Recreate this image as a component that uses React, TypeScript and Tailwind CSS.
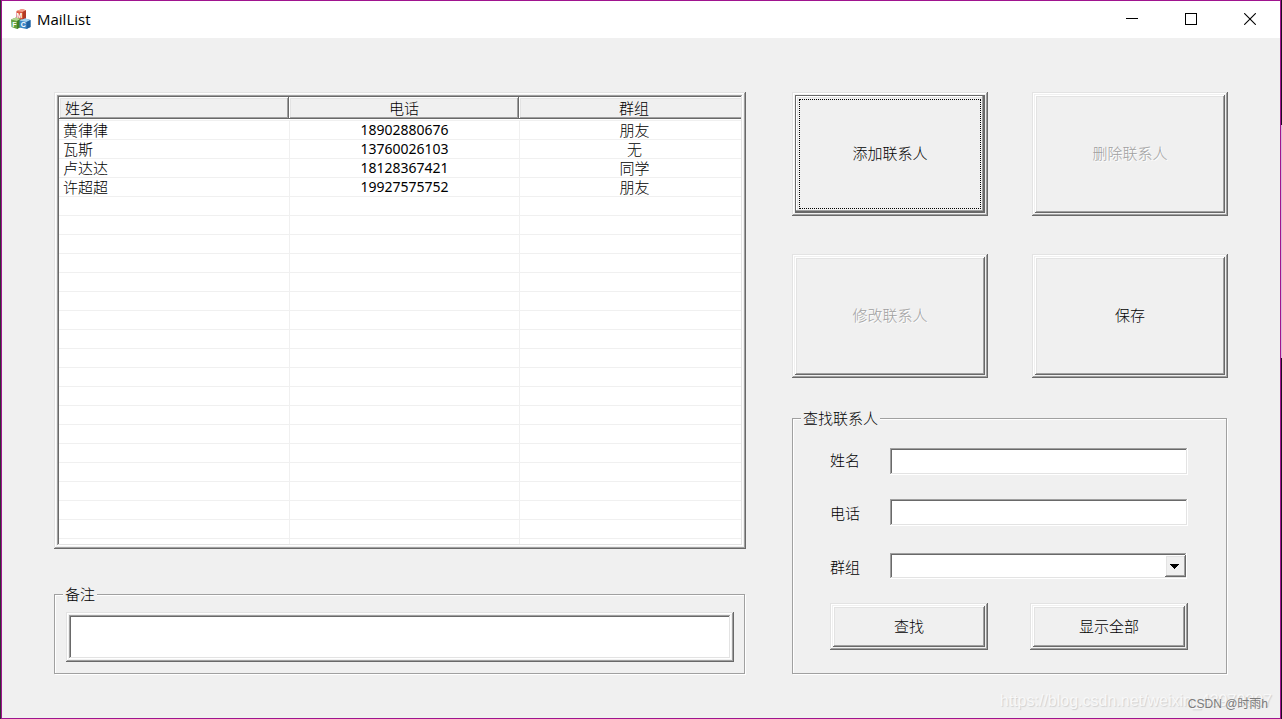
import { useState } from 'react';
import type { ReactNode } from 'react';

type Contact = { name: string; phone: string; group: string };

const contacts: Contact[] = [
  { name: '黄律律', phone: '18902880676', group: '朋友' },
  { name: '瓦斯', phone: '13760026103', group: '无' },
  { name: '卢达达', phone: '18128367421', group: '同学' },
  { name: '许超超', phone: '19927575752', group: '朋友' },
];

const ROW_COUNT = 22;

// Classic 3D edges
const sunken =
  'bg-white shadow-[inset_-1px_-1px_#fff,inset_1px_1px_#a0a0a0,inset_-2px_-2px_#e3e3e3,inset_2px_2px_#696969]';
const modalSunken =
  'bg-white shadow-[inset_-1px_-1px_#696969,inset_1px_1px_#e3e3e3,inset_-2px_-2px_#a0a0a0,inset_2px_2px_#fff,inset_-3px_-3px_#f0f0f0,inset_3px_3px_#f0f0f0,inset_-4px_-4px_#fff,inset_4px_4px_#a0a0a0,inset_-5px_-5px_#e3e3e3,inset_5px_5px_#696969]';
const modalRaised =
  'shadow-[inset_-1px_-1px_#696969,inset_1px_1px_#e3e3e3,inset_-2px_-2px_#a0a0a0,inset_2px_2px_#fff,inset_-3px_-3px_#f0f0f0,inset_3px_3px_#f0f0f0,inset_-4px_-4px_#696969,inset_4px_4px_#fff,inset_-5px_-5px_#a0a0a0,inset_5px_5px_#e3e3e3]';
const modalDefault =
  'shadow-[inset_-1px_-1px_#696969,inset_1px_1px_#e3e3e3,inset_-2px_-2px_#a0a0a0,inset_2px_2px_#fff,inset_-3px_-3px_#f0f0f0,inset_3px_3px_#f0f0f0,inset_-5px_-5px_#696969,inset_4px_4px_#696969,inset_-6px_-6px_#a0a0a0,inset_5px_5px_#fff,inset_6px_6px_#e3e3e3]';
const raised =
  'shadow-[inset_-1px_-1px_#696969,inset_1px_1px_#fff,inset_-2px_-2px_#a0a0a0,inset_2px_2px_#e3e3e3]';

function AppIcon() {
  return (
    <svg width="20" height="20" viewBox="0 0 20 20" aria-hidden="true">
      <path d="M5.500 2 11 0l4 1.200v8L11.500 11 5 9.500z" fill="#dd5a42" />
      <path d="M5.500 2 11 0l4 1.200-3.500 1.800z" fill="#f3a08c" />
      <path d="M11.500 3 15 1.200v8L11.500 11z" fill="#b23a26" />
      <path d="M0 10.500 5 8.500l4.500 1.500v8L6 20 .5 18z" fill="#63a03e" />
      <path d="M0 10.500 5 8.500l4.500 1.500L6 12z" fill="#b2d690" />
      <path d="M6 12 9.500 10v8L6 20z" fill="#417e26" />
      <path d="M8.500 11.500 14 9.500l5.500 1.500v7L15.500 20l-7-1.500z" fill="#3c88c6" />
      <path d="M8.500 11.500 14 9.500l5.500 1.500-4 2z" fill="#a6d4ef" />
      <path d="M15.500 13 19.500 11v7L15.500 20z" fill="#20619f" />
      <g fill="#fff" fontFamily="Liberation Sans, sans-serif" fontSize="7" fontWeight="700">
        <text x="5.500" y="8.800">M</text>
        <text x="1.300" y="17.500">F</text>
        <text x="9.800" y="18.300">C</text>
      </g>
    </svg>
  );
}

function TitleBar() {
  return (
    <header className="flex h-[37px] items-center justify-between bg-white pb-px pl-[9px] pr-6">
      <div className="flex items-center gap-[6px]">
        <AppIcon />
        <h1 className="font-['Open_Sans',sans-serif] text-[15px] font-normal leading-5">MailList</h1>
      </div>
      <div className="flex items-center gap-[47px]">
        <button type="button" aria-label="Minimize">
          <svg width="12" height="12" viewBox="0 0 12 12" className="block" shapeRendering="crispEdges">
            <path d="M0 5.500h12" stroke="#000" />
          </svg>
        </button>
        <button type="button" aria-label="Maximize">
          <svg width="12" height="12" viewBox="0 0 12 12" className="block" shapeRendering="crispEdges">
            <path d="M.5.5h11v11H.5z" fill="none" stroke="#000" />
          </svg>
        </button>
        <button type="button" aria-label="Close">
          <svg width="12" height="12" viewBox="0 0 12 12" className="block">
            <path d="M.2.2l11.600 11.600M11.800.2.2 11.800" stroke="#000" strokeWidth="1.100" />
          </svg>
        </button>
      </div>
    </header>
  );
}

function HeaderCell({ children, first }: { children: ReactNode; first?: boolean }) {
  return (
    <th className="border-b border-[#f0f0f0] p-0 pb-px font-light">
      <div className={`h-[22px] bg-[#f0f0f0] leading-[22px] ${raised} ${first ? 'pl-[6px] text-left' : 'text-center'}`}>
        {children}
      </div>
    </th>
  );
}

function ContactTable() {
  const rows = Array.from({ length: ROW_COUNT }, (_, i) => contacts[i]);

  return (
    <div className={`p-[5px] ${modalSunken}`}>
      <div className="overflow-hidden">
        {/* the last column runs a little past the frame */}
        <table className="w-[calc(100%+8px)] table-fixed border-separate border-spacing-0">
          <thead>
            <tr>
              <HeaderCell first>姓名</HeaderCell>
              <HeaderCell>电话</HeaderCell>
              <HeaderCell>群组</HeaderCell>
            </tr>
          </thead>
          <tbody>
            {rows.map((c, i) => (
              <tr key={i} className="h-[19px] leading-[18px]">
                <td className="border-b border-[#f0f0f0] p-0 pl-1">{c?.name}</td>
                <td className="border-b border-l border-[#f0f0f0] p-0 text-center font-['Noto_Sans',sans-serif] text-[14px] font-normal">
                  {c?.phone}
                </td>
                <td className="border-b border-l border-[#f0f0f0] p-0 text-center">{c?.group}</td>
              </tr>
            ))}
            <tr className="h-[5px]">
              <td className="p-0" />
              <td className="border-l border-[#f0f0f0] p-0" />
              <td className="border-l border-[#f0f0f0] p-0" />
            </tr>
          </tbody>
        </table>
      </div>
    </div>
  );
}

function GroupBox({ title, className, children }: { title: string; className: string; children: ReactNode }) {
  return (
    <fieldset
      className={`mr-px min-w-0 border border-[#a0a0a0] px-2 shadow-[1px_1px_#fff,inset_1px_1px_#fff] ${className}`}
    >
      <legend className="bg-[#f0f0f0] px-[2px] pb-[2px] leading-[17px]">{title}</legend>
      {children}
    </fieldset>
  );
}

function BigButton({ label, disabled, focused }: { label: string; disabled?: boolean; focused?: boolean }) {
  return (
    <button
      type="button"
      disabled={disabled}
      className={`flex h-[124px] p-[7px] disabled:text-[#a0a0a0] disabled:[text-shadow:1px_1px_#fff] ${
        focused ? modalDefault : modalRaised
      }`}
    >
      <span
        className={`flex h-full w-full items-center justify-center border border-dotted pb-1 ${
          focused ? 'border-black' : 'border-transparent'
        }`}
      >
        {label}
      </span>
    </button>
  );
}

function SearchPanel() {
  const [name, setName] = useState('');
  const [phone, setPhone] = useState('');
  const [group, setGroup] = useState('');

  return (
    <GroupBox title="查找联系人" className="mt-[31px] pb-[23px]">
      <form className="pl-[29px] pr-[30px] pt-5" onSubmit={(e) => e.preventDefault()}>
        <div className="flex items-center">
          <label htmlFor="name" className="w-[60px] pb-1">姓名</label>
          <input
            id="name"
            value={name}
            onChange={(e) => setName(e.target.value)}
            className={`h-[27px] min-w-0 flex-1 px-1 outline-none ${sunken}`}
          />
        </div>
        <div className="mt-6 flex items-center">
          <label htmlFor="phone" className="w-[60px]">电话</label>
          <input
            id="phone"
            value={phone}
            onChange={(e) => setPhone(e.target.value)}
            className={`h-[27px] min-w-0 flex-1 px-1 outline-none ${sunken}`}
          />
        </div>
        <div className="mt-[27px] flex items-center">
          <label htmlFor="group" className="w-[60px]">群组</label>
          <div className="relative flex min-w-0 flex-1 pr-px">
            <select
              id="group"
              value={group}
              onChange={(e) => setGroup(e.target.value)}
              className={`h-[26px] w-full appearance-none px-1 outline-none ${sunken}`}
            >
              <option value=""></option>
              <option>朋友</option>
              <option>同学</option>
              <option>无</option>
            </select>
            <span
              className={`pointer-events-none absolute right-[2px] top-[2px] flex h-[22px] w-[21px] items-center justify-center bg-[#f0f0f0] pr-[2px] ${raised}`}
            >
              <svg width="9" height="5" viewBox="0 0 9 5" shapeRendering="crispEdges">
                <path d="M0 0h9v1H0zM1 1h7v1H1zM2 2h5v1H2zM3 3h3v1H3zM4 4h1v1H4z" />
              </svg>
            </span>
          </div>
        </div>
        <div className="mt-6 flex justify-between">
          <button type="submit" className={`h-[47px] w-[158px] pb-[2px] ${modalRaised}`}>查找</button>
          <button type="button" className={`h-[47px] w-[158px] pb-[2px] ${modalRaised}`}>显示全部</button>
        </div>
      </form>
    </GroupBox>
  );
}

export default function App() {
  const [memo, setMemo] = useState('');

  return (
    <div className="flex min-h-screen bg-[#333] pl-px font-['Noto_Sans_CJK_SC',sans-serif] text-[15px] font-light leading-[19px] text-black">
      <div className="relative flex min-w-0 flex-1 flex-col border border-[#a0148f] bg-[#f0f0f0]">
        <TitleBar />
        <main className="flex flex-1 items-start gap-[46px] px-[52px] pt-[54px]">
          <section className="min-w-0 flex-1">
            <ContactTable />
            <GroupBox title="备注" className="mt-9 pb-[11px]">
              <div className="flex pl-[3px] pr-[2px] pt-2">
                <input
                  aria-label="备注"
                  value={memo}
                  onChange={(e) => setMemo(e.target.value)}
                  className={`h-[50px] min-w-0 flex-1 px-2 outline-none ${modalSunken}`}
                />
              </div>
            </GroupBox>
          </section>
          <section className="w-[436px] shrink-0">
            <div className="grid grid-cols-2 gap-x-11 gap-y-[38px]">
              <BigButton label="添加联系人" focused />
              <BigButton label="删除联系人" disabled />
              <BigButton label="修改联系人" disabled />
              <BigButton label="保存" />
            </div>
            <SearchPanel />
          </section>
        </main>
        <div className="pointer-events-none absolute bottom-2 right-2 font-['Liberation_Sans',sans-serif] text-[16px] font-normal text-[#f8f8f8] [text-shadow:1px_1px_1px_#d0d0d0]">
          https://blog.csdn.net/weixin_43979807
        </div>
        <div className="pointer-events-none absolute bottom-1 right-3 font-['Liberation_Sans','Noto_Sans_CJK_SC',sans-serif] text-[12px] font-normal text-[#7c7c7c]">
          CSDN @时雨h
        </div>
      </div>
      {/* sliver of the desktop behind the window */}
      <div className="flex w-px flex-col bg-[#210a24]">
        <div className="h-[125px]" />
        <div className="h-[233px] bg-[#d9b8d8]" />
      </div>
    </div>
  );
}
